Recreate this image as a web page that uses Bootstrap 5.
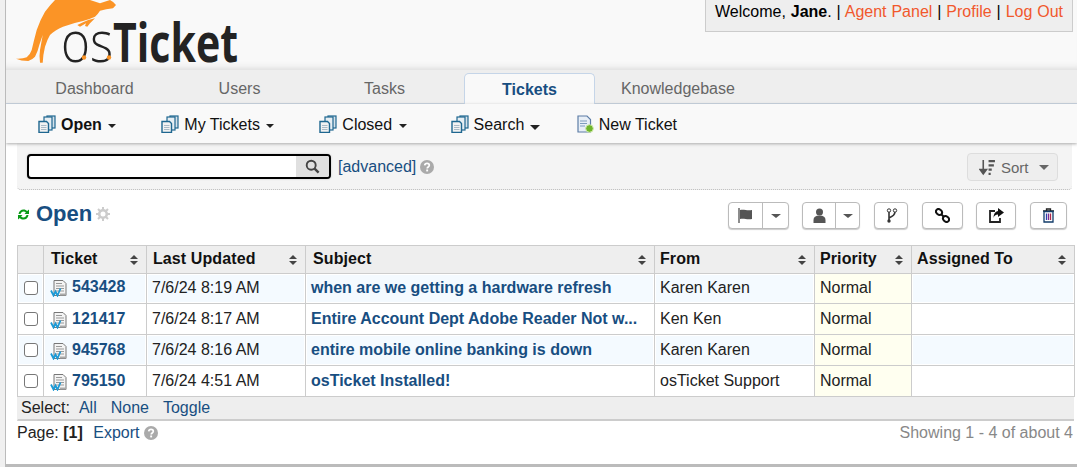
<!DOCTYPE html>
<html lang="en">
<head>
<meta charset="utf-8">
<title>osTicket</title>
<link href="https://cdn.jsdelivr.net/npm/bootstrap@5.3.0/dist/css/bootstrap.min.css" rel="stylesheet">
<style>
html,body{height:467px;overflow:hidden}
body{background:#f0f0f0;font-family:"Liberation Sans",Arial,sans-serif;font-size:16px;color:#000}
a{text-decoration:none}
.shell{margin-left:5px;width:1072px;height:467px;border-left:1px solid #bbb;border-bottom:3px solid #bbb;background:#fff;overflow:hidden}
.top-band{height:70px;background:#f9f9f9;box-shadow:inset 0 -8px 8px -8px #ccc}
.logo-art{display:block;margin-left:9px;width:230px;height:70px;flex:none}
.logo-os{font-family:"Open Sans","Liberation Sans",sans-serif;font-size:57px;font-weight:300;fill:#232323}
.logo-tk{font-family:"Open Sans","Liberation Sans",sans-serif;font-size:54px;font-weight:700;fill:#232323}
.welcome{height:32px;width:368px;margin-right:4px;padding:3px 9px 0;background:#eee;border:1px solid #ccc;border-top:0;white-space:nowrap;line-height:18px;margin-left:auto;word-spacing:.45px}
.welcome a{color:#f1582c}
.tabs-bar{height:34px;background:#eee;border-bottom:1px solid #c5d0de;padding-left:23px;gap:14px;align-items:flex-end}
.tab-item{width:131px;text-align:center;color:#666;height:33px;line-height:38px}
.tab-item.last{width:auto;padding:0 12px}
.tab-item.on{background:#f9f9f9;color:#184e81;font-weight:700;line-height:32px;border:1px solid #c5d5e8;border-bottom:0;border-radius:5px 5px 0 0;margin-bottom:-1px;height:31px}
.sub-bar{height:39px;background:#f9f9f9;box-shadow:0 1px 3px #aaa;padding:2px 0 0 32px;position:relative;z-index:1;color:#111}
.sub-item{color:#111;gap:5px;white-space:nowrap;margin-right:45px}
.sub-item.closer{margin-right:44px}
.sub-item.finder{margin-right:36px}
.sub-item svg{width:18px;height:18px;flex:none;margin-top:-1px}
.caret-mark{display:inline-block;border:4px solid transparent;border-top-color:#222;border-bottom:0;margin-left:2px;vertical-align:2px}
.caret-big{border-width:5px;border-bottom:0;vertical-align:0;margin-left:1px}
.page-area{padding:0 3px 0 11px}
.search-panel{height:47px;background:#f4f4f4;border-bottom:1px dotted #bbb;border-radius:0 0 4px 4px;padding:11px 14px 0 10px;width:1055px}
.find-box{width:304px;height:25px;border:2px solid #000;border-radius:4px;background:#fff;overflow:hidden;box-shadow:0 0 2px #bbb}
.find-go{width:33px;background:#e0e0e0}
.blue-link{color:#184e81}
.adv-link{margin:1px 0 0 7px;line-height:24px}
.adv-help{margin:6px 0 0 4px}
.sort-btn{width:91px;height:28px;background:#eee;border:1px solid #ddd;border-radius:4px;color:#666;font-size:15px;margin-top:-1px;gap:5px;padding-left:11px;line-height:1}
.sort-caret{border-top-color:#666;border-width:5px;border-bottom:0;margin-left:5px}
.title-row{height:55px;padding-right:7px}
.title-line{margin-top:13px}
.refresh-mark{margin-right:6px}
.title-text{font-size:22px;font-weight:700;color:#184e81;line-height:1}
.tool-set{margin-top:12px}
.tool{height:27px;background:#fff;border:1px solid #bbb;border-radius:4px;box-shadow:0 1px 1px #ccc;color:#555;margin-left:14px}
.tool.snug{margin-left:13px}
.tool svg{width:15px;height:15px}
.tool-main{border-right:1px solid #bbb;height:100%;width:34px}
.tool-drop{width:25px}
.tool-drop i{display:block;border:4px solid transparent;border-top-color:#555;border-bottom:0;border-left-width:5px;border-right-width:5px}
.w-a{width:61px}.w-b{width:58px}.w-c{width:34px}.w-d{width:41px}.w-e{width:40px}.w-f{width:37px}
.w-b .tool-main{width:33px}.w-b .tool-drop{width:23px}
.tk-table{table-layout:fixed;width:1057px;border-collapse:collapse;line-height:18px}
.tk-table th,.tk-table td{border:1px solid #ccc;padding:0 5px;white-space:nowrap;overflow:hidden;text-overflow:ellipsis;height:31px;color:#222;font-weight:400}
.tk-table th{background:#eee;height:28px;font-weight:700;color:#111;letter-spacing:.1px;position:relative;padding:0 5px 2px 6px}
.tk-table th.wide-pad{padding-left:7px}
.tk-table th.thin-pad{padding-left:5px}
.tk-table tbody tr:first-child td{height:30px;padding-bottom:2px}
.tint td{background:#f4faff;box-shadow:inset 0 0 0 1px #fff}
.tk-table td.prio{background:#fffff0;box-shadow:none;padding-left:5px}
.tk-table td.num,.tk-table td.sub{font-weight:700}
.tk-table td.num a,.tk-table td.sub a{color:#184e81}
.tk-table td.num{padding-left:6px}
.tick{width:14px;height:14px;border:1px solid #777;border-radius:3px;background:#fff;display:block;margin:0 auto}
.num svg{width:18px;height:18px;vertical-align:-5px;margin-right:4px}
.sort-mark{position:absolute;right:8px;top:9px;width:8px;height:10px}
.sel-row{height:24px;background:#eee;border-bottom:2px solid #ccc;width:1057px;padding:0 0 1px 3px;color:#222;gap:9px;line-height:1;border-left:1px solid #eee}
.sel-mid{margin:0 5px}
.foot-row{width:1056px;padding-top:3px;color:#222;line-height:18px}
.foot-link{margin-left:6px}
.q-mark{width:14px;height:14px;vertical-align:-2px;flex:none}
.muted-note{color:#888}
</style>
</head>
<body>
<svg width="0" height="0" class="position-absolute">
<defs>
<symbol id="docs" viewBox="0 0 18 18">
<rect x="9" y="1" width="8" height="12" fill="#d5e2ea" stroke="#1f6790" stroke-width="1.200"/>
<rect x="6" y="2" width="8" height="13" fill="#e6eef3" stroke="#1f6790" stroke-width="1.200"/>
<path d="M1 6.500h7.500L10.500 8.500v9H1z" fill="#f2f2f2" stroke="#1f6790" stroke-width="1.400"/>
<path d="M3 10.500h5.500M3 12.500h5.500M3 14.500h5.500" stroke="#a9bac6"/>
</symbol>
<symbol id="newdoc" viewBox="0 0 18 18">
<path d="M2 1h9l3.500 3.500V17H2z" fill="#e8eff7" stroke="#5d7da6" stroke-width="1.200"/>
<path d="M4 6h7M4 8.500h7M4 11h5" stroke="#7f9dbd"/>
<circle cx="13.500" cy="13.500" r="3.800" fill="#6fb52c" stroke="#cfe8a8"/>
</symbol>
<symbol id="tkt" viewBox="0 0 18 18">
<path d="M4 1.500h9l3 3v12H4z" fill="#f4f4f4" stroke="#777"/>
<path d="M6 4.500h6M6 7h8M6 9.500h8M6 12h8" stroke="#999"/>
<rect x="10" y="14.500" width="6" height="2" fill="#aaa"/>
<path d="M1 11.500l2.500 5 2-4 2 4 3-7" fill="none" stroke="#1c9ad6" stroke-width="1.800"/>
</symbol>
<symbol id="help" viewBox="0 0 14 14">
<circle cx="7" cy="7" r="7" fill="#aaa"/>
<path d="M4.700 5.400C4.900 3.900 5.900 3.300 7 3.300c1.300 0 2.300.8 2.300 2 0 1.700-2.100 1.600-2.100 3.100" fill="none" stroke="#fff" stroke-width="1.700"/>
<rect x="6.200" y="9.500" width="1.900" height="1.900" fill="#fff"/>
</symbol>
<symbol id="updn" viewBox="0 0 8 10">
<path d="M4 0l4 4H0zM4 10L0 6h8z" fill="#444"/>
</symbol>
</defs>
</svg>
<div class="shell">
  <div class="top-band d-flex">
    <svg class="logo-art" viewBox="0 0 230 70" role="img" aria-label="osTicket logo" overflow="visible">
      <path d="M1 58.700Q8 59 11.700 57.300Q15 55 16.700 50Q19 40 21.700 30Q25 20 30 11.700Q35 5 40 0L75 0L85 3.300L95 0Q99 2 101 5L98 8.300Q91 9 85 10.700Q83 14 80 16.700Q75 19 68 21Q58 23 48 26.700Q40 30 35 35Q32 40 30 46.700Q28 55 27.700 62.700L25 62.700Q24 56 25 50L27.700 35Q26 40 24.300 45Q23 51 20 56.700Q17 60 13.300 61Q6 61 1 58.700Z" fill="#fb9426"/>
      <path d="M62.300 25Q68 22 73.300 20L80 18.300L75 23.300L72.300 26.700L70 26L71 23.300L65 26.700Z" fill="#fb9426"/>
      <text y="62"><tspan class="logo-os" x="46" textLength="52" lengthAdjust="spacingAndGlyphs">os</tspan><tspan class="logo-tk" x="98" textLength="125" lengthAdjust="spacingAndGlyphs">Ticket</tspan></text>
      <circle cx="69" cy="57.500" r="2.200" fill="#fb9426"/><circle cx="94" cy="57.500" r="2.200" fill="#fb9426"/>
    </svg>
    <div class="welcome">Welcome, <strong>Jane</strong>. | <a href="#">Agent Panel</a> | <a href="#">Profile</a> | <a href="#">Log Out</a></div>
  </div>
  <nav class="tabs-bar d-flex">
    <a class="tab-item" href="#">Dashboard</a>
    <a class="tab-item" href="#">Users</a>
    <a class="tab-item" href="#">Tasks</a>
    <a class="tab-item on" href="#">Tickets</a>
    <a class="tab-item last" href="#">Knowledgebase</a>
  </nav>
  <nav class="sub-bar d-flex align-items-center">
    <a class="sub-item d-flex align-items-center" href="#"><svg><use href="#docs"/></svg><span><strong>Open</strong> <i class="caret-mark"></i></span></a>
    <a class="sub-item d-flex align-items-center" href="#"><svg><use href="#docs"/></svg><span>My Tickets <i class="caret-mark"></i></span></a>
    <a class="sub-item closer d-flex align-items-center" href="#"><svg><use href="#docs"/></svg><span>Closed <i class="caret-mark"></i></span></a>
    <a class="sub-item finder d-flex align-items-center" href="#"><svg><use href="#docs"/></svg><span>Search <i class="caret-mark caret-big"></i></span></a>
    <a class="sub-item d-flex align-items-center" href="#"><svg><use href="#newdoc"/></svg><span>New Ticket</span></a>
  </nav>
  <main class="page-area">
    <div class="search-panel d-flex align-items-start">
      <div class="find-box d-flex flex-shrink-0">
        <div class="flex-grow-1"></div>
        <div class="find-go d-flex align-items-center justify-content-center">
          <svg width="15" height="15" viewBox="0 0 15 15"><circle cx="6.200" cy="6.200" r="4.500" fill="none" stroke="#444" stroke-width="1.900"/><path d="M9.600 9.600l4 4" stroke="#444" stroke-width="2.400"/></svg>
        </div>
      </div>
      <a class="blue-link adv-link" href="#">[advanced]</a>
      <svg class="q-mark adv-help"><use href="#help"/></svg>
      <div class="sort-btn ms-auto d-flex align-items-center">
        <svg width="17" height="17" viewBox="0 0 16 16"><path d="M4 1v11M1 10l3 4 3-4z" fill="#555" stroke="#555" stroke-width="1.500"/><path d="M9 2h6M9 6h5M9 10h3M9 14h2" stroke="#555" stroke-width="2"/></svg>
        <span>Sort</span><i class="caret-mark sort-caret"></i>
      </div>
    </div>
    <div class="title-row d-flex justify-content-between align-items-start">
      <div class="d-flex align-items-center title-line">
        <svg width="13" height="13" viewBox="0 0 13 13" class="refresh-mark"><path d="M1.500 6C2 3 4 1.500 6.500 1.500c1.600 0 2.800.6 3.700 1.600L12 1.500V6H7.500l1.400-1.400C8.300 4 7.500 3.500 6.500 3.500c-1.500 0-2.500 1-3 2.500zM11.500 7c-.5 3-2.500 4.500-5 4.500-1.600 0-2.800-.6-3.700-1.600L1 11.500V7h4.500L4.100 8.400C4.700 9 5.500 9.500 6.500 9.500c1.500 0 2.500-1 3-2.500z" fill="#0a9a17"/></svg>
        <span class="title-text">Open</span>
        <svg width="14" height="14" viewBox="0 0 14 14" class="ms-1"><circle cx="7" cy="7" r="3.800" fill="none" stroke="#ccc" stroke-width="2.600"/><path d="M7 0v3M7 11v3M0 7h3M11 7h3M2 2l2 2M10 10l2 2M12 2l-2 2M4 10l-2 2" stroke="#ccc" stroke-width="2"/></svg>
      </div>
      <div class="d-flex align-items-center tool-set">
        <div class="tool w-a d-flex align-items-center">
          <div class="tool-main d-flex align-items-center justify-content-center"><svg viewBox="0 0 15 15"><path d="M1 0v15" stroke="#666" stroke-width="1.500"/><path d="M2 2c4-1 7 1 12 0v9c-5 1-8-1-12 0z" fill="#555"/></svg></div>
          <div class="tool-drop d-flex align-items-center justify-content-center"><i></i></div>
        </div>
        <div class="tool snug w-b d-flex align-items-center">
          <div class="tool-main d-flex align-items-center justify-content-center"><svg viewBox="0 0 15 15"><circle cx="7.500" cy="4" r="3.500" fill="#555"/><path d="M1.500 15v-3c0-3 2-4.500 6-4.500s6 1.500 6 4.500v3z" fill="#555"/></svg></div>
          <div class="tool-drop d-flex align-items-center justify-content-center"><i></i></div>
        </div>
        <div class="tool w-c d-flex align-items-center justify-content-center"><svg viewBox="0 0 15 15"><path d="M5 3v10M11 3c0 4-2 5-6 7" fill="none" stroke="#333" stroke-width="1.600"/><circle cx="5" cy="2.500" r="1.700" fill="#fff" stroke="#333"/><circle cx="11" cy="2.500" r="1.700" fill="#fff" stroke="#333"/><circle cx="5" cy="13" r="1.700" fill="#333"/></svg></div>
        <div class="tool w-d d-flex align-items-center justify-content-center"><svg viewBox="0 0 15 15"><ellipse cx="4" cy="4" rx="3.200" ry="2.600" transform="rotate(40 4 4)" fill="none" stroke="#111" stroke-width="2"/><ellipse cx="11" cy="11" rx="3.200" ry="2.600" transform="rotate(40 11 11)" fill="none" stroke="#111" stroke-width="2"/><path d="M6 6l3 3" stroke="#111" stroke-width="2"/></svg></div>
        <div class="tool snug w-e d-flex align-items-center justify-content-center"><svg viewBox="0 0 15 15"><path d="M6 3H1v11h10v-4" fill="none" stroke="#222" stroke-width="1.800"/><path d="M9 0l6 4.500L9 9V6.500C6.500 6.500 5 8 4.500 10c0-4 1.500-6.500 4.500-7z" fill="#111"/></svg></div>
        <div class="tool w-f d-flex align-items-center justify-content-center"><svg viewBox="0 0 15 15"><path d="M2 3h11M5.500 3V1h4v2" fill="none" stroke="#222" stroke-width="1.300"/><path d="M3 3.500h9V14H3z" fill="#fff" stroke="#123c6a" stroke-width="1.300"/><path d="M5.500 5.500V12" stroke="#2a3fb0" stroke-width="1.300"/><path d="M7.500 5.500V12" stroke="#7a2a90" stroke-width="1.300"/><path d="M9.500 5.500V12" stroke="#b02a4a" stroke-width="1.300"/></svg></div>
      </div>
    </div>
    <table class="tk-table">
      <colgroup><col style="width:26px"><col style="width:103px"><col style="width:159px"><col style="width:349px"><col style="width:160px"><col style="width:97px"><col style="width:163px"></colgroup>
      <thead>
        <tr>
          <th></th>
          <th class="wide-pad">Ticket<svg class="sort-mark"><use href="#updn"/></svg></th>
          <th>Last Updated<svg class="sort-mark"><use href="#updn"/></svg></th>
          <th class="wide-pad">Subject<svg class="sort-mark"><use href="#updn"/></svg></th>
          <th class="thin-pad">From<svg class="sort-mark"><use href="#updn"/></svg></th>
          <th class="thin-pad">Priority<svg class="sort-mark"><use href="#updn"/></svg></th>
          <th class="thin-pad">Assigned To<svg class="sort-mark"><use href="#updn"/></svg></th>
        </tr>
      </thead>
      <tbody>
        <tr class="tint"><td><span class="tick"></span></td><td class="num"><svg><use href="#tkt"/></svg><a href="#">543428</a></td><td>7/6/24 8:19 AM</td><td class="sub"><a href="#">when are we getting a hardware refresh</a></td><td>Karen Karen</td><td class="prio">Normal</td><td></td></tr>
        <tr><td><span class="tick"></span></td><td class="num"><svg><use href="#tkt"/></svg><a href="#">121417</a></td><td>7/6/24 8:17 AM</td><td class="sub"><a href="#">Entire Account Dept Adobe Reader Not w...</a></td><td>Ken Ken</td><td class="prio">Normal</td><td></td></tr>
        <tr class="tint"><td><span class="tick"></span></td><td class="num"><svg><use href="#tkt"/></svg><a href="#">945768</a></td><td>7/6/24 8:16 AM</td><td class="sub"><a href="#">entire mobile online banking is down</a></td><td>Karen Karen</td><td class="prio">Normal</td><td></td></tr>
        <tr><td><span class="tick"></span></td><td class="num"><svg><use href="#tkt"/></svg><a href="#">795150</a></td><td>7/6/24 4:51 AM</td><td class="sub"><a href="#">osTicket Installed!</a></td><td>osTicket Support</td><td class="prio">Normal</td><td></td></tr>
      </tbody>
    </table>
    <div class="sel-row d-flex align-items-center">
      <span>Select:</span><a class="blue-link" href="#">All</a><a class="blue-link sel-mid" href="#">None</a><a class="blue-link" href="#">Toggle</a>
    </div>
    <div class="foot-row d-flex justify-content-between">
      <div>Page: <strong>[1]</strong> <a class="blue-link foot-link" href="#">Export</a> <svg class="q-mark"><use href="#help"/></svg></div>
      <div class="muted-note">Showing 1 - 4 of about 4</div>
    </div>
  </main>
</div>
</body>
</html>
